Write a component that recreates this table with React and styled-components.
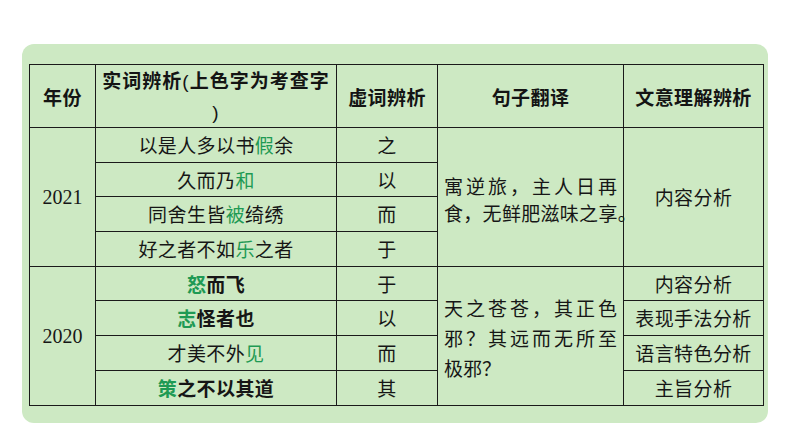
import React from "react";
import styled, { createGlobalStyle } from "styled-components";

const GlobalStyle = createGlobalStyle`
  html, body {
    margin: 0;
    padding: 0;
    background: #ffffff;
  }
  body {
    font-family: "Noto Sans CJK SC", "Noto Sans", sans-serif;
    color: #161616;
  }
`;

const Page = styled.div`
  width: 794px;
  height: 447px;
  padding: 44px 0 0 22px;
  box-sizing: border-box;
`;

const Panel = styled.div`
  width: 746px;
  height: 379px;
  box-sizing: border-box;
  padding: 20px 5px 0 7px;
  background: #cde9c3;
  border-radius: 12px;
`;

const Table = styled.table`
  border-collapse: collapse;
  table-layout: fixed;
  width: 734px;
  background: #cde9c3;
`;

const Th = styled.th`
  height: 61px;
  padding: 0 4px;
  border: 1.5px solid #1a1a1a;
  font-size: 19px;
  font-weight: 700;
  letter-spacing: ${(p) => p.$spacing || "0.4px"};
  line-height: 29px;
  text-align: center;
  vertical-align: middle;
  white-space: nowrap;
  overflow: hidden;
  color: #141414;
`;

const Paren = styled.span`
  font-family: "Liberation Sans", Arial, sans-serif;
  font-weight: 400;
  letter-spacing: 1px;
`;

const Td = styled.td`
  height: 33.7px;
  padding: 0 6px;
  border: 1.5px solid #1a1a1a;
  font-size: 19px;
  font-weight: ${(p) => (p.$bold ? 700 : 400)};
  letter-spacing: 0.4px;
  line-height: 30px;
  text-align: center;
  vertical-align: middle;
  white-space: nowrap;
`;

const Year = styled(Td)`
  font-family: "Liberation Serif", "Times New Roman", serif;
  font-size: 20px;
  letter-spacing: 0;
`;

const Sentence = styled(Td)`
  text-align: left;
  padding: 5px 6px 0 6px;
  line-height: ${(p) => p.$lh || "28px"};
  letter-spacing: 0;
  overflow: visible;
`;

const Line = styled.span`
  display: block;
  text-align: ${(p) => (p.$fill ? "justify" : "left")};
  text-align-last: ${(p) => (p.$fill ? "justify" : "left")};
  white-space: ${(p) => (p.$fill ? "normal" : "nowrap")};
  letter-spacing: ${(p) => p.$spacing || "0"};
`;

const Key = styled.span`
  color: #1f9a54;
`;

const rows2021 = [
  { word: <>以是人多以书<Key>假</Key>余</>, func: "之" },
  { word: <>久而乃<Key>和</Key></>, func: "以" },
  { word: <>同舍生皆<Key>被</Key>绮绣</>, func: "而" },
  { word: <>好之者不如<Key>乐</Key>之者</>, func: "于" },
];

const rows2020 = [
  { word: <><Key>怒</Key>而飞</>, func: "于", bold: true, topic: "内容分析" },
  { word: <><Key>志</Key>怪者也</>, func: "以", bold: true, topic: "表现手法分析" },
  { word: <>才美不外<Key>见</Key></>, func: "而", topic: "语言特色分析" },
  { word: <><Key>策</Key>之不以其道</>, func: "其", bold: true, topic: "主旨分析" },
];

export default function App() {
  return (
    <Page>
      <GlobalStyle />
      <Panel>
        <Table>
          <colgroup>
            <col style={{ width: 66 }} />
            <col style={{ width: 241 }} />
            <col style={{ width: 101 }} />
            <col style={{ width: 186 }} />
            <col style={{ width: 140 }} />
          </colgroup>
          <thead>
            <tr>
              <Th>年份</Th>
              <Th $spacing="1px">
                实词辨析<Paren>(</Paren>上色字为考查字
                <br />
                <Paren>)</Paren>
              </Th>
              <Th>虚词辨析</Th>
              <Th>句子翻译</Th>
              <Th>文意理解辨析</Th>
            </tr>
          </thead>
          <tbody>
            {rows2021.map((r, i) => (
              <tr key={`a${i}`}>
                {i === 0 && <Year rowSpan={4}>2021</Year>}
                <Td>{r.word}</Td>
                <Td>{r.func}</Td>
                {i === 0 && (
                  <>
                    <Sentence rowSpan={4} $lh="27px">
                      <Line $fill>寓逆旅，主人日再</Line>
                      <Line $spacing="0.3px">食，无鲜肥滋味之享。</Line>
                    </Sentence>
                    <Td rowSpan={4}>内容分析</Td>
                  </>
                )}
              </tr>
            ))}
            {rows2020.map((r, i) => (
              <tr key={`b${i}`}>
                {i === 0 && <Year rowSpan={4}>2020</Year>}
                <Td $bold={r.bold}>{r.word}</Td>
                <Td>{r.func}</Td>
                {i === 0 && (
                  <Sentence rowSpan={4} $lh="30px">
                    <Line $fill>天之苍苍，其正色</Line>
                    <Line $fill>邪？其远而无所至</Line>
                    <Line>极邪？</Line>
                  </Sentence>
                )}
                <Td>{r.topic}</Td>
              </tr>
            ))}
          </tbody>
        </Table>
      </Panel>
    </Page>
  );
}
